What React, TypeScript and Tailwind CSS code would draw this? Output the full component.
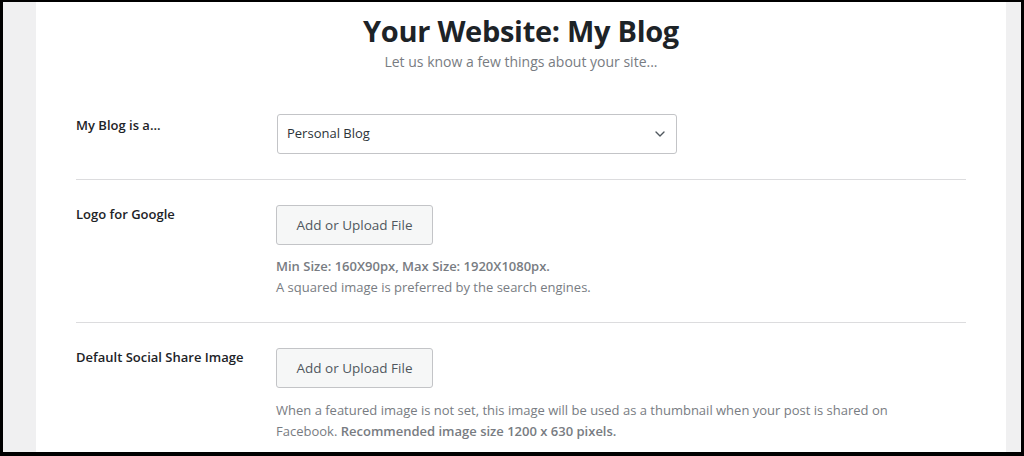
import { ChevronDown } from 'lucide-react';

function UploadButton() {
  return (
    <button className="h-[40px] w-[157px] rounded-[3px] border border-[#c3c4c7] bg-[#f6f7f7] text-[13.5px] text-[#50575e]">
      Add or Upload File
    </button>
  );
}

export default function App() {
  const font = { fontFamily: '"Open Sans", "Noto Sans", sans-serif' };

  return (
    <div className="flex h-[456px] w-[1024px] bg-black pt-[2px] pr-[3px] pb-[4px] pl-[3px]" style={font}>
      <div className="w-[33px] bg-[#f0f0f1]" />
      <div className="flex-1 overflow-hidden bg-white px-[40px]">
        <div className="pt-[12px] text-center">
          <h1 className="text-[29px] font-bold leading-[34px] tracking-[-0.3px] text-[#1d2327]">Your Website: My Blog</h1>
          <p className="mt-[4px] text-[14px] leading-[20px] text-[#787c82]">Let us know a few things about your site...</p>
        </div>

        <div className="mt-[42px] flex border-b border-[#dcdcde] pb-[25px]">
          <div className="w-[201px] pt-[2px] text-[13px] font-semibold text-[#1d2327]">My Blog is a...</div>
          <div className="flex h-[40px] w-[400px] items-center justify-between rounded-[3px] border border-[#c3c4c7] pr-[8px] pl-[9px] text-[13px] text-[#2c3338]">
            <span>Personal Blog</span>
            <ChevronDown className="h-[16px] w-[16px] text-[#50575e]" strokeWidth={2} />
          </div>
        </div>

        <div className="flex border-b border-[#dcdcde] pt-[25px] pb-[24px]">
          <div className="w-[200px] text-[13px] font-semibold text-[#1d2327]">Logo for Google</div>
          <div>
            <UploadButton />
            <p className="mt-[11px] text-[13px] leading-[21px] text-[#787c82]">
              <span className="font-semibold">Min Size: 160X90px, Max Size: 1920X1080px.</span>
              <br />
              A squared image is preferred by the search engines.
            </p>
          </div>
        </div>

        <div className="flex pt-[25px]">
          <div className="w-[200px] text-[13px] font-semibold text-[#1d2327]">Default Social Share Image</div>
          <div className="flex-1">
            <UploadButton />
            <p className="mt-[12px] max-w-[640px] text-[13px] leading-[21px] text-[#787c82]">
              When a featured image is not set, this image will be used as a thumbnail when your post is shared on Facebook.{' '}
              <span className="font-semibold">Recommended image size 1200 x 630 pixels.</span>
            </p>
          </div>
        </div>
      </div>
      <div className="w-[15px] bg-[#f0f0f1]" />
    </div>
  );
}
